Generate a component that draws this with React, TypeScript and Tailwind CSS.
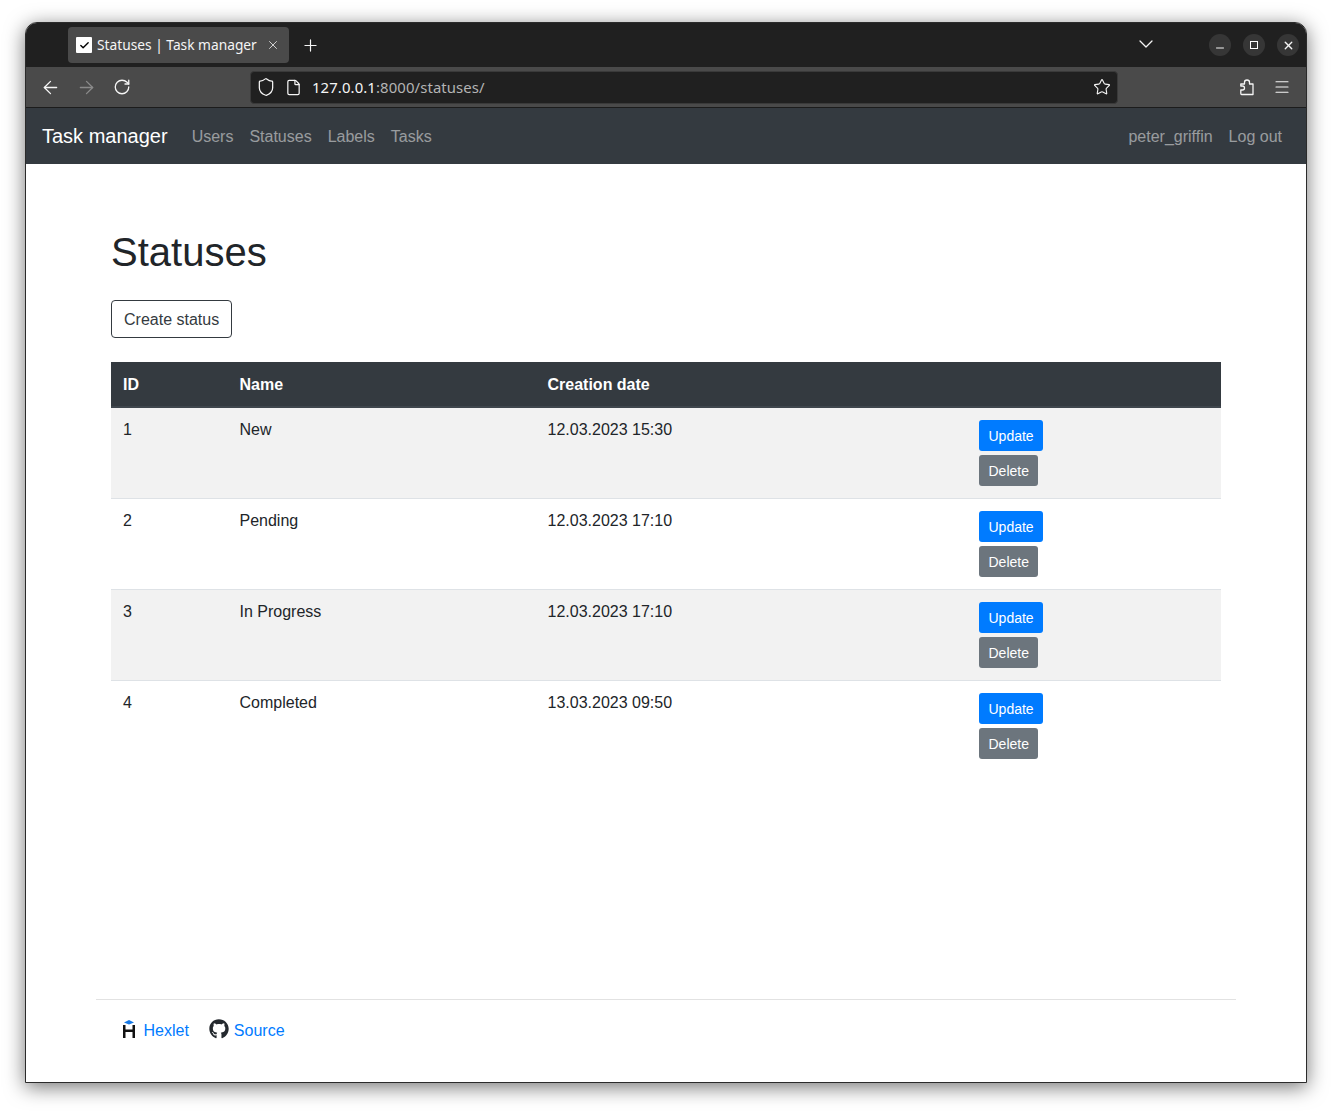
import React from 'react';
import { ArrowLeft, ArrowRight, ChevronDown, File, Menu, Minus, Plus, RotateCw, Shield, Star, X, Check } from 'lucide-react';
import { FaGithub } from 'react-icons/fa';

const STATUSES = [
  { id: 1, name: 'New', date: '12.03.2023 15:30' },
  { id: 2, name: 'Pending', date: '12.03.2023 17:10' },
  { id: 3, name: 'In Progress', date: '12.03.2023 17:10' },
  { id: 4, name: 'Completed', date: '13.03.2023 09:50' },
];

const NAV_LINKS = ['Users', 'Statuses', 'Labels', 'Tasks'];

const UI_FONT = "font-['Noto_Sans','Open_Sans',sans-serif]";

const BrowserChrome = () => (
  <>
    <div className={`h-[44px] bg-[#202020] flex items-center text-[#f5f5f5] ${UI_FONT}`}>
      <div className="ml-[42px] w-[221px] h-[36px] rounded-[4px] bg-[#4a4a4a] flex items-center pl-2 shrink-0">
        <span className="w-4 h-4 bg-white rounded-[1px] flex items-center justify-center shrink-0">
          <Check className="w-[11px] h-[11px] text-black" strokeWidth={3} />
        </span>
        <span className="ml-[5px] text-[13.75px] whitespace-nowrap pt-px">Statuses | Task manager</span>
        <X className="w-[14px] h-[14px] ml-[9px] shrink-0 text-[#e4e4e4] -mt-[1px]" strokeWidth={1.5} />
      </div>
      <Plus className="w-[19px] h-[19px] ml-[12px]" strokeWidth={1.5} />
      <ChevronDown className="w-[24px] h-[24px] ml-auto mr-[51px] -mt-[2px]" strokeWidth={1.25} />
      <div className="flex items-center gap-[12px] mr-[7px]">
        <span className="w-[22px] h-[22px] rounded-full bg-[#363636] flex items-center justify-center">
          <Minus className="w-[12px] h-[12px] mt-[5px]" strokeWidth={2} />
        </span>
        <span className="w-[22px] h-[22px] rounded-full bg-[#363636] flex items-center justify-center">
          <span className="w-[8px] h-[8px] border border-white" />
        </span>
        <span className="w-[22px] h-[22px] rounded-full bg-[#363636] flex items-center justify-center">
          <X className="w-[13px] h-[13px]" strokeWidth={2.5} />
        </span>
      </div>
    </div>
    <div className={`h-[41px] bg-[#4a4a4a] border-b border-[#1c1c1c] flex items-center text-[#f5f5f5] ${UI_FONT}`}>
      <ArrowLeft className="w-[21px] h-[21px] ml-[14px] shrink-0" strokeWidth={1.5} />
      <ArrowRight className="w-[21px] h-[21px] ml-[15px] shrink-0 text-[#8a8a8a]" strokeWidth={1.5} />
      <RotateCw className="w-[18px] h-[18px] ml-[16px] shrink-0" strokeWidth={1.75} />
      <div className="ml-[119px] w-[868px] h-[33px] bg-[#202020] border border-[#3a3a3a] rounded-[4px] flex items-center shrink-0">
        <Shield className="w-[20px] h-[20px] ml-[5px] shrink-0" strokeWidth={1.5} />
        <File className="w-[17px] h-[17px] ml-[9px] shrink-0" strokeWidth={1.75} />
        <span className="ml-[10px] text-[14.9px] tracking-[0.1px]">
          127.0.0.1<span className="text-[#b4b4b4]">:8000/statuses/</span>
        </span>
        <Star className="w-[18px] h-[18px] ml-auto mr-[6px] shrink-0" strokeWidth={1.5} />
      </div>
      <svg className="w-[14px] h-[17px] ml-[122px] shrink-0" viewBox="0 0 14 17" fill="none" stroke="currentColor" strokeWidth="1.3" strokeLinejoin="round">
        <path d="M4.5 5V3.2C4.5 2 5.5 1 7 1s2.5 1 2.5 2.2V5H13v10.5H1.6c-.5 0-.8-.4-.8-.9V11h1.7c1.3 0 2-.8 2-2s-.7-2-2-2H.8V5z" />
      </svg>
      <Menu className="w-[18px] h-[18px] ml-[19px] shrink-0" strokeWidth={1.5} />
    </div>
  </>
);

const Navbar = () => (
  <nav className="h-[56px] bg-[#343a40] flex items-center px-4">
    <span className="text-[20px] text-white mr-4">Task manager</span>
    <div className="flex pt-px">
      {NAV_LINKS.map((link) => (
        <a key={link} className="px-2 text-[rgba(255,255,255,0.5)]">{link}</a>
      ))}
    </div>
    <div className="flex ml-auto pt-px">
      <a className="px-2 text-[rgba(255,255,255,0.5)]">peter_griffin</a>
      <a className="px-2 text-[rgba(255,255,255,0.5)]">Log out</a>
    </div>
  </nav>
);

const StatusTable = () => (
  <table className="w-[1110px] table-fixed border-collapse text-[#212529]">
    <thead>
      <tr className="h-[45px] bg-[#343a40] text-white font-bold text-left">
        <th className="w-[116.5px] px-3 pt-[2px]">ID</th>
        <th className="w-[308px] px-3 pt-[2px]">Name</th>
        <th className="w-[431.5px] px-3 pt-[2px]">Creation date</th>
        <th className="px-3"></th>
      </tr>
    </thead>
    <tbody>
      {STATUSES.map((status) => (
        <tr key={status.id} className="h-[91px] border-t border-[#dee2e6] first:border-t-2 first:border-t-[#3f464d] odd:bg-[#f2f2f2] align-top">
          <td className="px-3 pt-3 leading-[20px]">{status.id}</td>
          <td className="px-3 pt-3 leading-[20px]">{status.name}</td>
          <td className="px-3 pt-3 leading-[20px]">{status.date}</td>
          <td className="px-3 pt-3">
            <div className="flex flex-col items-start gap-1">
              <a className="h-[31px] px-[9.5px] pt-[2px] flex items-center rounded-[3px] bg-[#007bff] text-white text-[14px]">Update</a>
              <a className="h-[31px] px-[9.5px] pt-[2px] flex items-center rounded-[3px] bg-[#6c757d] text-white text-[14px]">Delete</a>
            </div>
          </td>
        </tr>
      ))}
    </tbody>
  </table>
);

const Footer = () => (
  <footer className="mt-auto mx-[70px] h-[83px] border-t border-[#e2e2e2] flex items-start pt-[20px] pl-[26px] text-[#007bff]">
    <svg className="w-[14px] h-[18px]" viewBox="0 0 14 18">
      <path d="M7 0l5 2.5-5 2-5-2z" fill="#1578e6" />
      <path d="M1 5h2.5v4.5h7V5H13v13h-2.5v-6h-7v6H1z" fill="#111" />
    </svg>
    <a className="ml-[7.5px] leading-[22px]">Hexlet</a>
    <FaGithub className="w-[20px] h-[20px] ml-5 -mt-px text-[#24292e]" />
    <a className="ml-[5px] leading-[22px]">Source</a>
  </footer>
);

export default function App() {
  return (
    <div className="h-[1111px] w-[1332px] overflow-hidden bg-white pt-[22px] pl-[25px] font-['Liberation_Sans',Arial,sans-serif] text-[16px]">
      <div className="w-[1282px] h-[1061px] flex flex-col bg-white border border-[#2b2b2b] rounded-t-[12px] overflow-hidden shadow-[0_4px_20px_rgba(0,0,0,0.55)]">
        <BrowserChrome />
        <Navbar />
        <main className="flex-1 flex flex-col">
          <div className="px-[85px] pt-[64px]">
            <h1 className="text-[40px] leading-[48px] text-[#212529] mb-6">Statuses</h1>
            <a className="inline-flex items-center h-[38px] px-3 pt-px border border-[#343a40] rounded-[4px] text-[#343a40] mb-6">Create status</a>
            <StatusTable />
          </div>
          <Footer />
        </main>
      </div>
    </div>
  );
}
